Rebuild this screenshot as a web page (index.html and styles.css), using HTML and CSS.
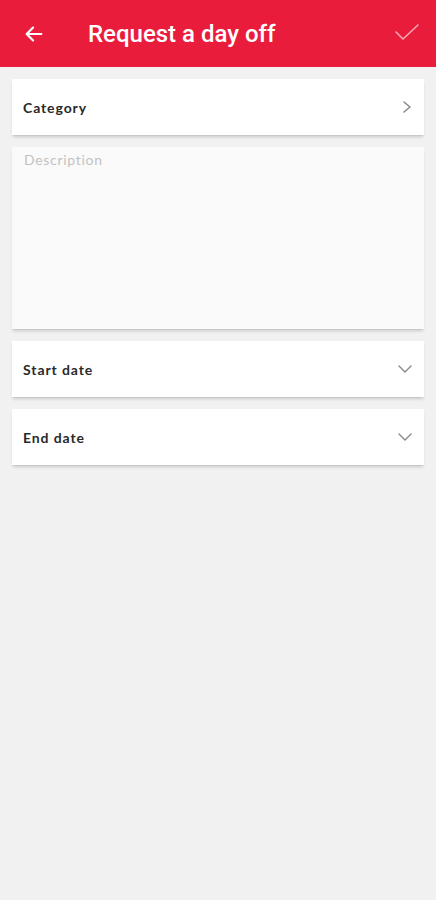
FILE: index.html
```html
<!DOCTYPE html>
<html>
<head>
<meta charset="utf-8">
<link rel="stylesheet" href="styles.css">
</head>
<body>
<header class="bar">
  <svg class="back" width="22" height="22" viewBox="0 0 24 24"><path d="M20 12H4M11 5l-7 7 7 7" fill="none" stroke="#fff" stroke-width="2.4" stroke-linecap="round" stroke-linejoin="round"/></svg>
  <h1 class="title">Request a day off</h1>
  <svg class="check" width="26" height="20" viewBox="0 0 26 20"><path d="M2 10l7 7L24 3" fill="none" stroke="#f7a7b3" stroke-width="1.6" stroke-linecap="round" stroke-linejoin="round"/></svg>
</header>
<main class="content">
  <div class="card row">
    <span class="label">Category</span>
    <svg class="chev" width="12" height="14" viewBox="0 0 12 14"><path d="M3 2l6 5-6 5" fill="none" stroke="#888" stroke-width="1.5" stroke-linecap="round" stroke-linejoin="round"/></svg>
  </div>
  <div class="card desc">
    <span class="placeholder">Description</span>
  </div>
  <div class="card row">
    <span class="label">Start date</span>
    <svg class="chev" width="16" height="10" viewBox="0 0 16 10"><path d="M2 2l6 6 6-6" fill="none" stroke="#888" stroke-width="1.4" stroke-linecap="round" stroke-linejoin="round"/></svg>
  </div>
  <div class="card row">
    <span class="label">End date</span>
    <svg class="chev" width="16" height="10" viewBox="0 0 16 10"><path d="M2 2l6 6 6-6" fill="none" stroke="#888" stroke-width="1.4" stroke-linecap="round" stroke-linejoin="round"/></svg>
  </div>
</main>
</body>
</html>
```
FILE: styles.css
```css
html, body {
  margin: 0;
  padding: 0;
  background: #f1f1f1;
  height: 100%;
}
body {
  font-family: Lato, "Noto Sans", sans-serif;
}
.bar {
  height: 67px;
  background: #ea1c3c;
  display: flex;
  align-items: center;
  padding: 0 16px 0 23px;
  box-sizing: border-box;
}
.back {
  flex: none;
}
.title {
  margin: 0 0 0 43px;
  flex: 1;
  color: #fff;
  font-family: Roboto, "Noto Sans", sans-serif;
  font-weight: 500;
  font-size: 24px;
}
.check {
  flex: none;
  margin-top: -4px;
}
.content {
  padding: 12px 12px 0 12px;
  display: flex;
  flex-direction: column;
  gap: 12px;
}
.card {
  background: #fff;
  box-shadow: 0 3px 3px -1px rgba(0,0,0,0.16), 0 1px 0 rgba(0,0,0,0.04);
}
.row {
  height: 56px;
  display: flex;
  align-items: center;
  justify-content: space-between;
  padding: 0 11px 0 11px;
}
.label {
  font-weight: 700;
  font-size: 14px;
  color: #2a2a2a;
  letter-spacing: 0.9px;
}
.desc {
  background: #fafafa;
  height: 182px;
  padding: 2px 12px;
  box-sizing: border-box;
}
.placeholder {
  font-size: 14px;
  color: #c2c2c2;
  letter-spacing: 0.7px;
}
.chev {
  flex: none;
}
```
